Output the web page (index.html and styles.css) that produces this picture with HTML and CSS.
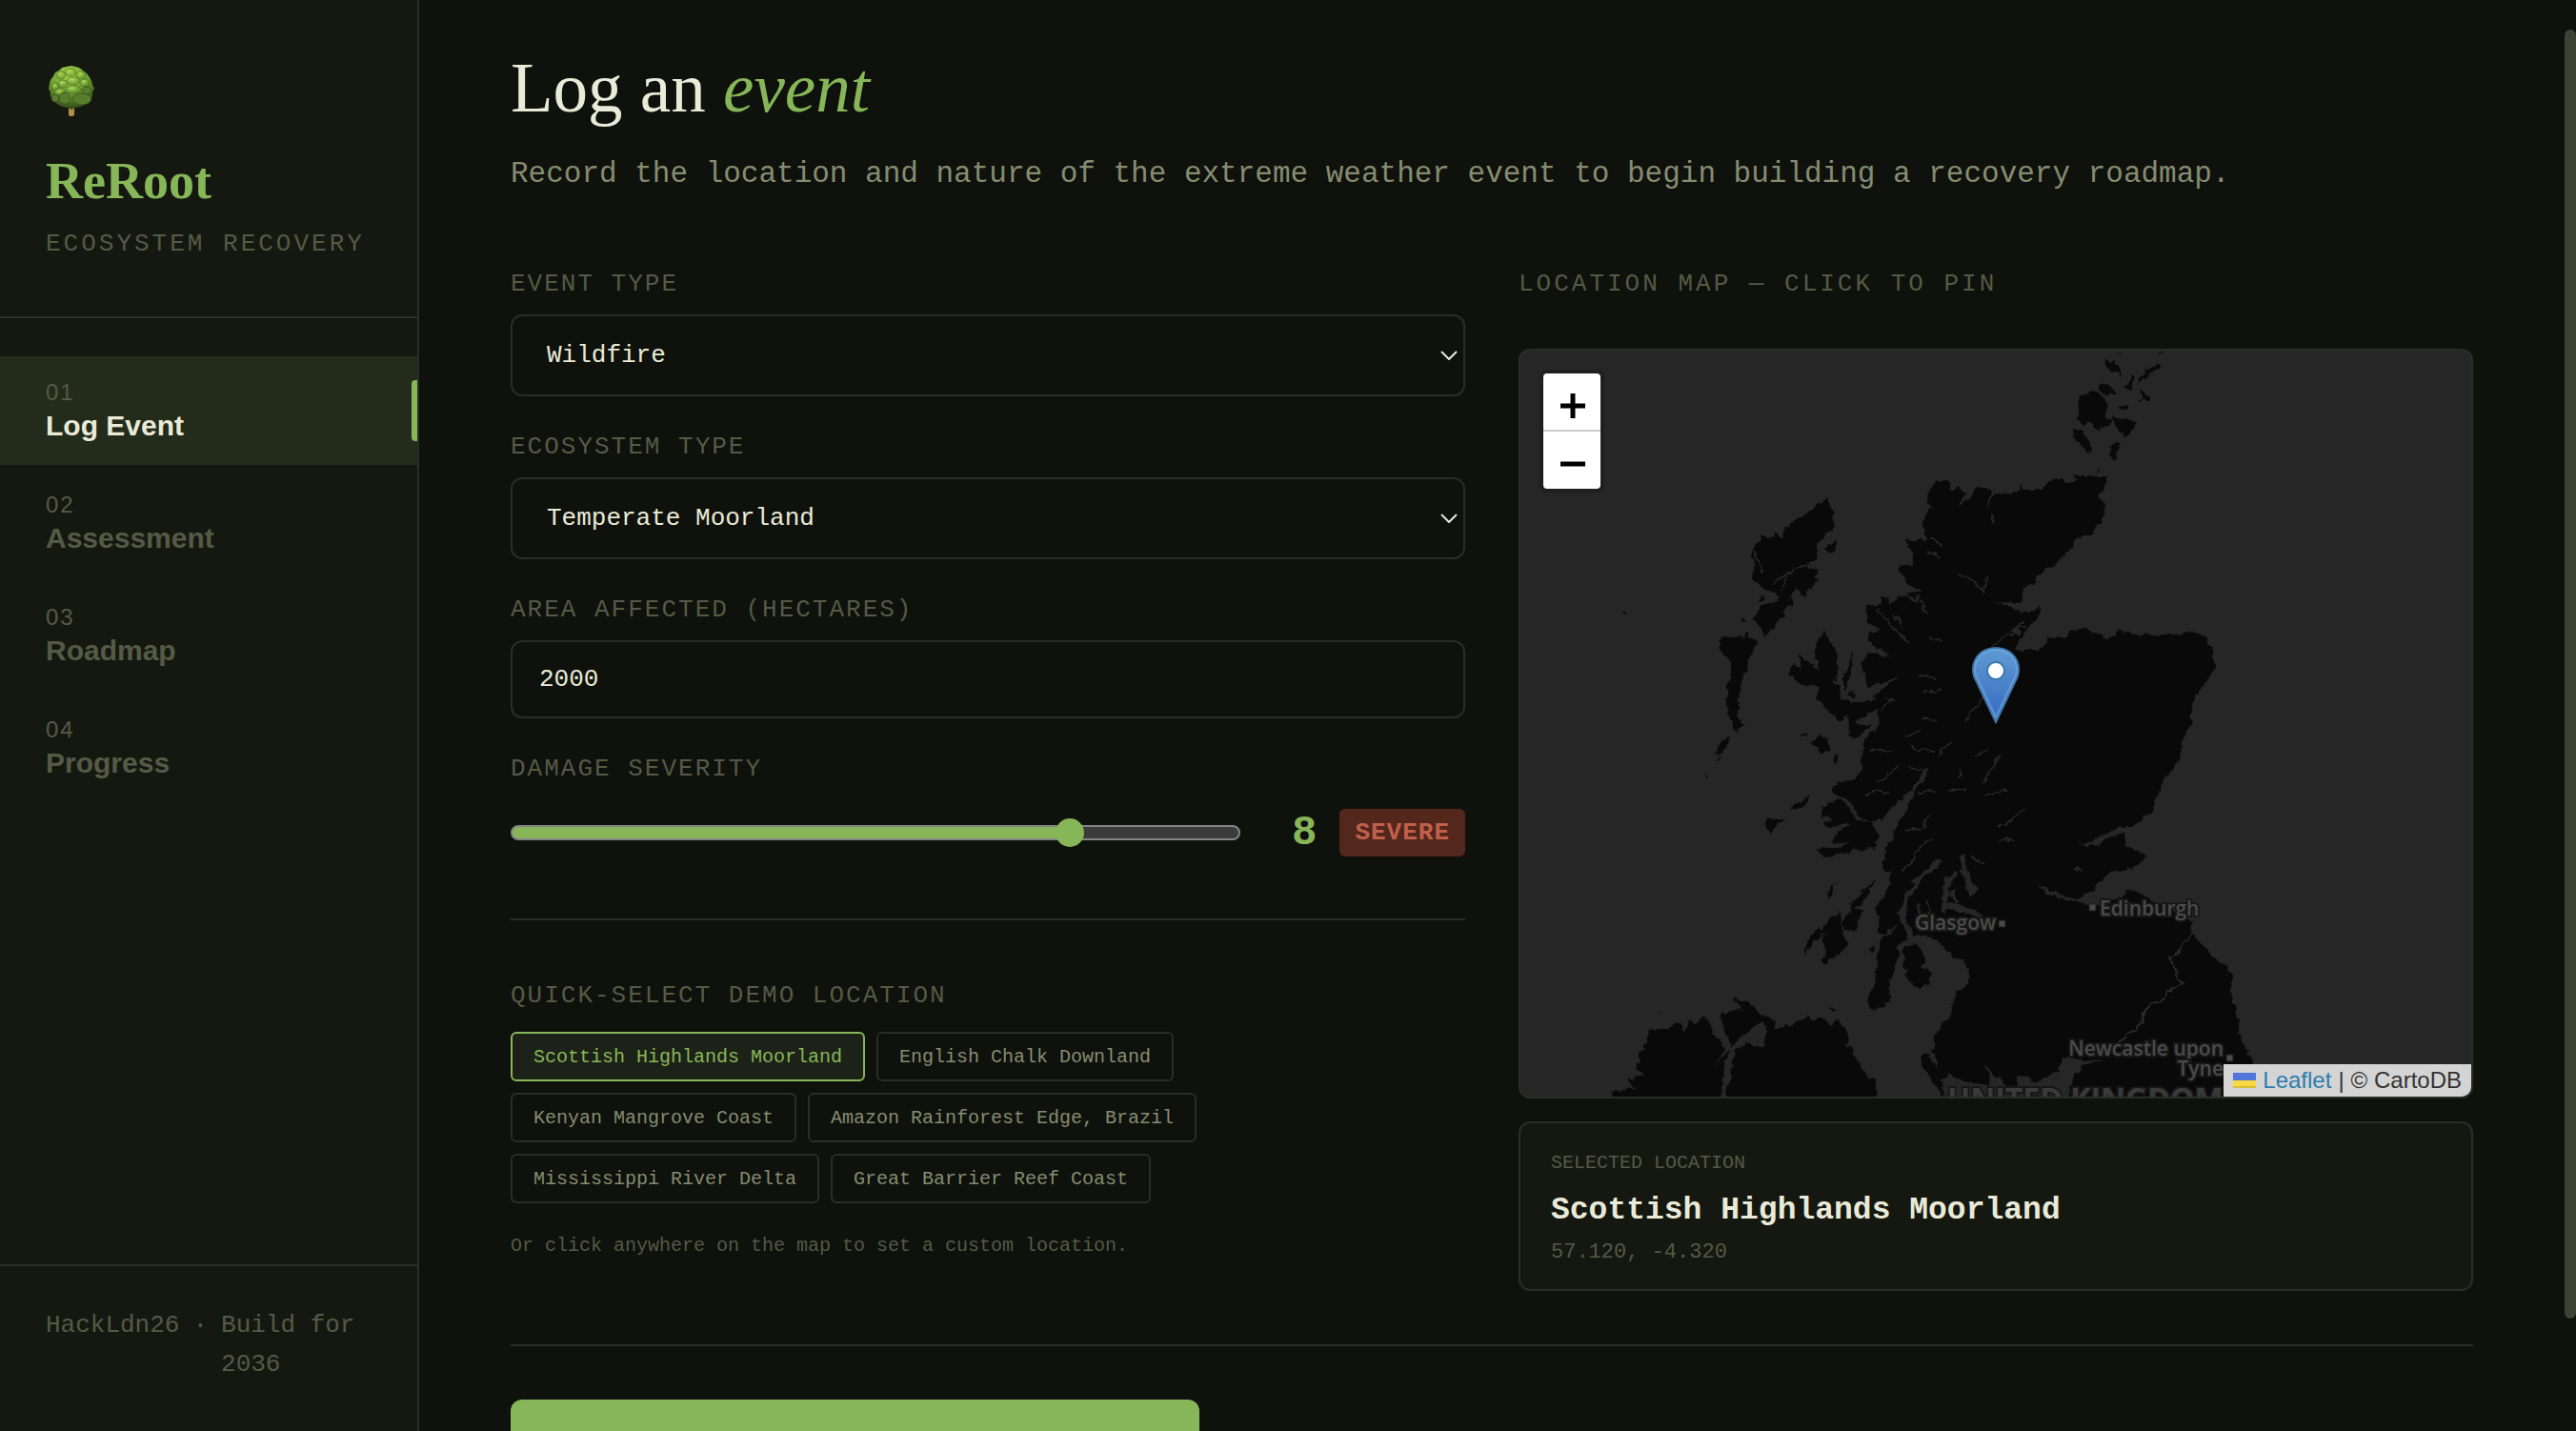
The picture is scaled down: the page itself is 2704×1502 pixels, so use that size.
FILE: index.html
```
<!DOCTYPE html>
<html lang="en">
<head>
<meta charset="utf-8">
<title>ReRoot</title>
<link rel="stylesheet" href="styles.css">
</head>
<body>
<div class="app">
  <aside class="sidebar">
    <header class="brand">
      <svg class="brand-tree" viewBox="0 0 50 54" aria-hidden="true">
        <defs>
          <radialGradient id="leaf" cx=".45" cy=".2" r=".85">
            <stop offset="0" stop-color="#a6d84a"/><stop offset=".5" stop-color="#6f9f33"/><stop offset="1" stop-color="#243c15"/>
          </radialGradient>
          <radialGradient id="clump" cx=".4" cy=".3" r=".7">
            <stop offset="0" stop-color="#b9e85c" stop-opacity=".85"/><stop offset="1" stop-color="#4f7a25" stop-opacity=".3"/>
          </radialGradient>
        </defs>
        <path fill="#b08f4a" d="M22 44h6v8q-3 2-6 0z"/>
        <path fill="url(#leaf)" d="M25 0l4 1 4 1 4 3 4 3 3 4 2 4 1 4 2 4-2 4v4l-3 4-4 4-5 3-6 1-4 2-4-2-6-1-5-3-4-4-3-4v-4l-2-4 1-5 1-4 3-4 2-4 4-2 3-3 5-1z"/>
        <g fill="url(#clump)" stroke="#39581d" stroke-opacity=".5">
          <ellipse cx="24" cy="7" rx="6" ry="4"/><ellipse cx="14" cy="10" rx="5" ry="4"/><ellipse cx="35" cy="10" rx="5" ry="4"/>
          <ellipse cx="27" cy="16" rx="7" ry="4"/><ellipse cx="16" cy="19" rx="5" ry="4"/><ellipse cx="39" cy="18" rx="5" ry="4"/>
          <ellipse cx="8" cy="22" rx="4" ry="4"/><ellipse cx="27" cy="25" rx="8" ry="4"/><ellipse cx="13" cy="28" rx="6" ry="4"/>
        </g>
        <g fill="#577d2d" stroke="#2b4418" stroke-opacity=".6">
          <ellipse cx="41" cy="26" rx="5" ry="4"/><ellipse cx="18" cy="34" rx="6" ry="6"/><ellipse cx="36" cy="35" rx="10" ry="6"/><ellipse cx="8" cy="34" rx="4" ry="4"/>
        </g>
      </svg>
      <div class="brand-name">ReRoot</div>
      <div class="brand-tag">ECOSYSTEM RECOVERY</div>
    </header>
    <nav class="steps">
      <a class="step active" href="#log"><span class="step-num">01</span><span class="step-label">Log Event</span></a>
      <a class="step" href="#assessment"><span class="step-num">02</span><span class="step-label">Assessment</span></a>
      <a class="step" href="#roadmap"><span class="step-num">03</span><span class="step-label">Roadmap</span></a>
      <a class="step" href="#progress"><span class="step-num">04</span><span class="step-label">Progress</span></a>
    </nav>
    <footer class="side-foot"><span>HackLdn26</span><span>·</span><span>Build for 2036</span></footer>
  </aside>

  <main class="main">
    <h1>Log an <em>event</em></h1>
    <p class="intro">Record the location and nature of the extreme weather event to begin building a recovery roadmap.</p>

    <div class="columns">
      <section class="form">
        <div class="field">
          <label for="event-type">EVENT TYPE</label>
          <div class="select">
            <select id="event-type"><option>Wildfire</option></select>
            <svg class="chevron" viewBox="0 0 18 10" aria-hidden="true"><path d="M1 1l8 8 8-8"/></svg>
          </div>
        </div>
        <div class="field">
          <label for="eco-type">ECOSYSTEM TYPE</label>
          <div class="select">
            <select id="eco-type"><option>Temperate Moorland</option></select>
            <svg class="chevron" viewBox="0 0 18 10" aria-hidden="true"><path d="M1 1l8 8 8-8"/></svg>
          </div>
        </div>
        <div class="field">
          <label for="area">AREA AFFECTED (HECTARES)</label>
          <input class="text-input" id="area" type="text" inputmode="numeric" value="2000">
        </div>
        <div class="field">
          <label for="severity">DAMAGE SEVERITY</label>
          <div class="severity">
            <input class="slider" id="severity" type="range" min="1" max="10" value="8">
            <output class="sev-value" for="severity">8</output>
            <span class="sev-badge">SEVERE</span>
          </div>
        </div>
        <div class="quick">
          <h2 class="quick-title">QUICK-SELECT DEMO LOCATION</h2>
          <div class="chips">
            <button class="chip on" type="button">Scottish Highlands Moorland</button>
            <button class="chip" type="button">English Chalk Downland</button>
            <button class="chip" type="button">Kenyan Mangrove Coast</button>
            <button class="chip" type="button">Amazon Rainforest Edge, Brazil</button>
            <button class="chip" type="button">Mississippi River Delta</button>
            <button class="chip" type="button">Great Barrier Reef Coast</button>
          </div>
          <p class="hint">Or click anywhere on the map to set a custom location.</p>
        </div>
      </section>

      <section class="place">
        <h2 class="map-title">LOCATION MAP — CLICK TO PIN</h2>
        <div class="map">
          <svg class="tiles" viewBox="1596 368 998 783" preserveAspectRatio="xMidYMid slice" aria-hidden="true">
            <defs>
              <filter id="coast" x="-5%" y="-5%" width="110%" height="110%" color-interpolation-filters="sRGB">
                <feTurbulence type="fractalNoise" baseFrequency=".11" numOctaves="3" seed="4" result="n"/>
                <feDisplacementMap in="SourceGraphic" in2="n" scale="9" xChannelSelector="R" yChannelSelector="G"/>
              </filter>
              <linearGradient id="pin" x1="0" y1="0" x2="0" y2="1"><stop offset="0" stop-color="#5f9bd3"/><stop offset="1" stop-color="#3569c0"/></linearGradient>
            </defs>
            <g filter="url(#coast)">
              <rect x="1500" y="300" width="1200" height="950" fill="#262626"/>
              <g fill="#090909">
                <path d="M2033 503L2048 507 2051 518 2054 510 2064 517 2056 533 2069 520 2071 512 2082 512 2091 517 2082 533 2094 518 2105 519 2119 515 2122 509 2125 514 2142 513 2156 504 2165 504 2167 507 2179 506 2178 496 2183 500 2212 500 2209 513 2203 523 2211 530 2205 547 2196 558 2180 565 2170 581 2147 599 2140 604 2137 611 2125 617 2123 633 2091 632 2105 635 2121 642 2129 643 2144 635 2131 658 2125 665 2114 682 2139 682 2152 670 2169 668 2171 663 2184 659 2192 661 2212 669 2225 662 2258 667 2275 667 2289 667 2298 663 2312 666 2321 677 2326 697 2326 702 2308 727 2301 743 2299 755 2301 758 2290 780 2288 797 2281 808 2268 821 2266 830 2262 843 2256 853 2239 869 2227 869 2210 874 2194 884 2183 884 2190 888 2200 887 2216 877 2231 873 2233 880 2231 886 2244 893 2252 900 2244 908 2231 915 2221 911 2201 927 2199 935 2179 943 2156 937 2138 927 2150 940 2177 946 2196 950 2227 942 2233 935 2248 937 2252 943 2264 947 2298 967 2302 980 2316 995 2325 1007 2337 1013 2343 1028 2342 1047 2346 1057 2351 1077 2348 1083 2358 1103 2365 1113 2366 1127 2373 1160 2169 1160 2177 1130 2183 1123 2190 1116 2210 1113 2189 1112 2164 1110 2162 1123 2152 1127 2137 1137 2129 1132 2117 1130 2117 1142 2108 1141 2100 1128 2094 1130 2084 1117 2089 1133 2085 1140 2062 1135 2046 1127 2037 1135 2043 1160 2035 1143 2017 1120 2017 1107 2025 1104 2028 1117 2034 1120 2027 1103 2034 1083 2046 1070 2048 1053 2055 1040 2066 1033 2067 1025 2063 1010 2051 1005 2039 992 2033 987 2023 982 2005 983 1994 988 1990 1013 1983 1037 1985 1047 1978 1057 1966 1059 1960 1053 1961 1042 1968 1037 1969 1017 1972 993 1978 983 1972 977 1973 960 1969 955 1982 932 1987 913 1978 917 1976 895 1987 877 1996 860 2010 833 2007 828 1991 847 1971 865 1950 857 1941 840 1926 832 1922 827 1928 821 1948 818 1955 810 1953 798 1959 777 1962 770 1973 760 1971 747 1991 733 1967 732 1992 710 1975 716 1959 722 1954 697 1959 683 1973 690 1985 689 1959 672 1962 662 1973 663 1959 653 1959 635 1971 635 1975 625 1982 627 1984 637 1996 623 2016 622 2001 608 1992 598 1994 593 2007 595 2009 583 1998 567 2023 565 2018 550 2025 533 2033 537 2022 527 2025 517z"/>
                <g transform="translate(1580 270) scale(.357 .333)">
                  <path d="M948 757l20 48-5 35 5 10-38 35-15 25 3 40-30 15 30 20 2 40-25 20-10 20-20 5-10-25-15 20 10 30-25 10-5 25-55 60-40-55 45-50 20 5 15-25-50-20-30-30 5-30-5-50 25-60 30 10 15-15 20 20 5-40 70-45z"/>
                  <path d="M978 890l-10 30-18 10-12-15zM755 1065l8 12-12 8zM700 1135l5 8-10 3zM348 1115l12 4-8 5zM620 1225l20-30 60 5 10-20 30 30-15 35-10 25-5 30-15 30-10 60 5 30-5 25 15 35-30 5-15-45-3-60 5-40 8-60-15-15z"/>
                  <path d="M932 1175l20 20 25 60v60l-10 30 25 25-5 20 20 10 50 5 45-20 30 10-35 35-50 20-20 35-15-5-5-45-15 20-10 5-25-20-15-20-25-30 5-35-25-10-8 20-55-50 10-40 25 25-5-50 60 55-18-60z"/>
                  <path d="M1022 1240l-5 60-8 50-10 15-8-35 20-50zM1020 1370l12 10-10 12-14-8z"/>
                </g>
                <g transform="translate(2100 350) scale(.385 .333)">
                  <path d="M245 180l35 20 17 30-15 30 22 15-20 25-30 8-15-28-10 10-15-20-2-45 3-25zM275 160l30 10 5 25-20 3-18-20zM215 300l30 40 8 30-20 8-15-30-22-20 5-25zM285 88l20 0 15 20 12 25-18-15-12 5zM325 58l2 25-6-10zM440 55l-8 18 2-15zM435 97l4 12-30 20-38 30 20-40 10-15 5 10zM355 130l8 8-5 45-18-18 12-5zM380 180l28 25-5 15-10-15-20 15 15-20zM320 235l22-15 2 28zM305 260l20 15 20-5 22 10 0 20-30 25-10-15-15-15zM295 355l30-8-10 30 2 25-12-5-5-30zM270 425l4 8-8 2z"/>
                </g>
                <g transform="translate(1580 760) scale(.357 .333)">
                  <path d="M658 0h45l-10 10-8 20-5-20zM655 40l5 30-20 20-22 15 0-30 15-25zM595 150l5 15-5 8zM626 110l5 8-8 3zM900 58l28-24 22 12 0 28-16 20zM975 92l10 10-8 22-16-8zM860 38l28-8v8zM895 220l-5 25-30 28-25 0zM830 290l-30 25-20 25-16-20 2-20 20-5 8 8zM1010 0h70l-40 40-30 8zM975 495l-10 30-15 28-5-20zM1090 488l-15 30-20 50-30 15 25 5-25 68-30-5-5-30 25-30 10-40zM983 590l5 60 17 45-15 30-30 15-20 18-12-10 18-40-18-30 20-15-20 5-20 20-25 50 5-50 20-30 15-18 10 10 20-35z"/>
                  <path d="M930 290l5-30 55-25 25 35 15 30 50 10 20 40-15 35-35 18-25-8-35 10-50 17-25-22 15-15 55 5 28-20-53 5 20-35 35-20-20-5-40 10-20-15 25-5z"/>
                  <path d="M1200 692l25 18 10 38-10 15 25 20-5 40-30 8-30-15-10-50-8-40 10-25zM1082 690l0 20-8 15 0-20z"/>
                  <path d="M315 1200v-35l45-20 25 5-25-30 50-10-25-40 15-10-10-25 15-5 25-65 30-5 50-15 20 20 10-30 20 10 30-30 10 30 15 35 20 20 10 30-30 45 45-50-5-30-20-60 5-25 60-10-25-40 60 25 10 25 50 28-10 25-40 35-50 40-25 10-10 15-10 90-20 60z"/>
                  <path d="M640 1200l10-70 10-50 15-60 25-10 45 8 22-60 40 2 20-10 40-15 20-15 20 12 30-2 20 15 15-10 30 25 5 30-3 25 18 5 2 25 25 40 25 30 18 5 0 50-30 40zM440 908l15 8-5 2zM940 893l30 5-5 12-5-10z"/>
                </g>
              </g>
              <g fill="none" stroke="#262626" stroke-width="2">
                <path d="M2055 602L2072 610 2083 622 2085 607M2025 565L2038 572M2024 579L2034 584M2090 540L2092 548M1996 623L2012 630M2012 627L2024 642M1972 640L1996 668 2003 675M1988 645L1996 658M2026 670L2040 672M2015 709L2032 712M2018 728L2036 724M2018 755L2032 757M2063 757L2088 720 2100 703M2089 679L2107 667 2128 657M1998 773L2015 768M2005 785L2030 788M2035 793L2048 778M2073 795L2086 785M2082 823L2090 805 2100 792M2056 817L2058 807M2045 830L2062 829M2084 833L2106 831M1961 788L1985 788M1970 822L1984 813 1992 803M2003 805L2022 808 2010 828M1958 835L1970 830 1984 833M2013 833L2035 829M2096 868L2110 862 2124 850M2098 883L2112 881M2069 900L2083 905M1996 915L2010 900 2014 890 2030 880M1998 870L2015 872 2026 855M1978 983L1992 970M2016 960L2014 950M2026 960L2022 945M1862 612L1880 600 1905 592M1868 620L1878 604M1852 600L1842 580"/>
                <path stroke-width="5" d="M2007 987L1996 958 2004 938 2013 925 2025 912 2038 903M2040 957L2044 930 2054 913M2044 932L2042 920M2042 951L2060 954 2080 960M2048 935L2054 948M2059 897L2063 917 2070 940M1971 866L2008 830 2022 810"/>
                <path fill="#262626" d="M2068 925L2076 936 2068 940zM2112 662L2122 656 2118 666zM2178 912L2184 915 2180 910z"/>
                <path stroke-width="7" d="M1810 1163V1145L1814 1120 1820 1100 1836 1087 1852 1075"/>
                <path fill="#262626" d="M1833 1094L1854 1077 1850 1098z"/>
              </g>
              <path fill="none" stroke="#2b2b2b" stroke-width="2" d="M2302 980L2292 990 2284 1003 2277 1005 2284 1018 2289 1031 2276 1043 2271 1050 2262 1051 2249 1065 2247 1075 2234 1085 2224 1095"/>
            </g>
            <g class="places">
              <text x="2010" y="976">Glasgow</text>
              <text x="2204" y="961">Edinburgh</text>
              <text x="2334" y="1108" text-anchor="end">Newcastle upon</text>
              <text x="2334" y="1129" text-anchor="end">Tyne</text>
              <text class="country" x="2044" y="1165">UNITED KINGDOM</text>
            </g>
            <g fill="#4a4a4a" stroke="#1b1b1b"><rect x="2098" y="966" width="7" height="7"/><rect x="2193" y="949" width="7" height="7"/><rect x="2337" y="1107" width="7" height="7"/></g>
            <path fill="url(#pin)" stroke="#3f78ae" stroke-width="2" d="M2095 758L2075 716C2071 709 2071 705 2071 703C2071 689 2082 680 2095 680S2119 689 2119 703C2119 705 2119 709 2115 716Z"/>
            <path fill="none" stroke="#78aee0" stroke-opacity=".6" stroke-width="2" d="M2095 753L2077 715C2073 709 2073 706 2073 703C2073 690 2083 682 2095 682S2117 690 2117 703C2117 706 2117 709 2113 715Z"/>
            <circle cx="2095" cy="704" r="9" fill="#fff" stroke="#3c76ab" stroke-width="2"/>
          </svg>
          <div class="zoom">
            <button type="button" aria-label="Zoom in"><svg viewBox="0 0 26 26"><path d="M0 13h26M13 0v26"/></svg></button>
            <button type="button" aria-label="Zoom out"><svg viewBox="0 0 26 26"><path d="M0 13h26"/></svg></button>
          </div>
          <div class="credit">
            <svg class="flag" viewBox="0 0 24 16" aria-hidden="true"><path fill="#5277dc" d="M0 0h24v8H0z"/><path fill="#f8d943" d="M0 8h24v8H0z"/><path fill="#dcbf38" d="M0 14h24v2H0z"/></svg>
            <a href="#leaflet">Leaflet</a><span>|</span><span>© CartoDB</span>
          </div>
        </div>
        <div class="card">
          <div class="card-cap">SELECTED LOCATION</div>
          <div class="card-name">Scottish Highlands Moorland</div>
          <div class="card-coord">57.120, -4.320</div>
        </div>
      </section>
    </div>

    <div class="actions"><button class="primary" type="button"></button></div>
  </main>
  <div class="scroll"><div class="scroll-thumb"></div></div>
</div>
</body>
</html>
```
FILE: styles.css
```
:root {
  --bg: #0e110c;
  --panel: #151811;
  --line: #2a2e27;
  --dim: #555a45;
  --muted: #868c70;
  --cream: #e9ead8;
  --green: #87b659;
  --mono: "Liberation Mono", monospace;
  --sans: "Liberation Sans", sans-serif;
  --serif: "Liberation Serif", serif;
}
* { box-sizing: border-box; }
body {
  margin: 0;
  background: var(--bg);
  color: var(--cream);
  font-family: var(--mono);
  font-size: 26px;
}
h1, h2, p { margin: 0; font-weight: 400; }
button, input, select { font: inherit; color: inherit; margin: 0; }

.app { display: flex; height: 100vh; overflow: hidden; }

/* Sidebar */
.sidebar {
  flex: 0 0 440px;
  display: flex;
  flex-direction: column;
  background: var(--panel);
  border-right: 2px solid var(--line);
}
.brand { padding: 69px 48px 56px; border-bottom: 2px solid var(--line); }
.brand-tree { display: block; width: 50px; height: 54px; margin: 0 2px 35px; }
.brand-name {
  font: 700 54px/64px var(--serif);
  color: var(--green);
  margin-bottom: 14px;
}
.brand-tag { line-height: 40px; letter-spacing: 3px; color: var(--dim); white-space: nowrap; }
.steps { flex: 1; display: flex; flex-direction: column; gap: 4px; padding-top: 40px; }
.step {
  position: relative;
  display: flex;
  flex-direction: column;
  gap: 3px;
  padding: 24px 48px 23px;
  color: var(--dim);
  font-family: var(--sans);
  text-decoration: none;
}
.step-num { font-size: 24px; line-height: 28px; letter-spacing: 2px; color: var(--dim); }
.step-label { font-size: 30px; line-height: 36px; font-weight: 700; }
.step.active { background: #232b1b; }
.step.active .step-label { color: var(--cream); }
.step.active::after {
  content: "";
  position: absolute;
  right: 0;
  top: 25px;
  bottom: 25px;
  width: 6px;
  border-radius: 4px 0 0 4px;
  background: var(--green);
}
.side-foot {
  display: flex;
  gap: 14px;
  padding: 42px 48px 49px;
  border-top: 2px solid var(--line);
  line-height: 41px;
  color: var(--dim);
}

/* Main column */
.main { flex: 1; min-width: 0; padding: 53px 96px 0; overflow: hidden; }
h1 { font: 400 73px/80px var(--serif); margin-bottom: 26px; }
h1 em { color: var(--green); }
.intro { font-size: 31px; line-height: 48px; color: var(--muted); }
.columns {
  display: grid;
  grid-template-columns: 1fr 1fr;
  gap: 56px;
  padding: 72px 0 56px;
  border-bottom: 2px solid var(--line);
}
.form, .place { min-width: 0; }

.field { margin-bottom: 34px; }
.field label, .quick-title {
  display: block;
  margin-bottom: 13px;
  font-size: 26px;
  line-height: 38px;
  letter-spacing: 2px;
  color: var(--dim);
}
.select { position: relative; }
.select select, .text-input {
  display: block;
  width: 100%;
  height: 86px;
  padding: 0 36px;
  background: var(--bg);
  border: 2px solid var(--line);
  border-radius: 12px;
  appearance: none;
}
.text-input { height: 82px; padding: 0 28px; }
.chevron {
  position: absolute;
  right: 8px;
  top: 38px;
  width: 18px;
  height: 10px;
  fill: none;
  stroke: var(--cream);
  stroke-width: 2;
}
.severity { display: flex; align-items: center; gap: 24px; padding-top: 10px; }
.slider { flex: 1; min-width: 0; height: 32px; background: none; appearance: none; }
.slider::-webkit-slider-runnable-track {
  height: 16px;
  border: 2px solid #858585;
  border-radius: 8px;
  background: linear-gradient(to right, var(--green) 77%, #3b3b3b 77%);
}
.slider::-webkit-slider-thumb {
  appearance: none;
  width: 30px;
  height: 30px;
  margin-top: -9px;
  border-radius: 50%;
  background: var(--green);
}
.sev-value {
  width: 56px;
  text-align: right;
  font-size: 44px;
  line-height: 50px;
  font-weight: 700;
  color: var(--green);
}
.sev-badge {
  padding: 0 16px;
  border-radius: 6px;
  background: #54271d;
  color: #c0604a;
  font-weight: 700;
  line-height: 50px;
  letter-spacing: 1px;
}
.quick { margin-top: 65px; padding-top: 60px; border-top: 2px solid var(--line); }
.quick-title { margin-bottom: 19px; }
.chips { display: flex; flex-wrap: wrap; gap: 12px; }
.chip {
  height: 52px;
  padding: 0 22px;
  background: none;
  border: 2px solid var(--line);
  border-radius: 6px;
  font-size: 20px;
  color: var(--muted);
}
.chip.on { background: #1d2218; border-color: var(--green); color: var(--green); }
.hint { margin-top: 29px; font-size: 20px; line-height: 32px; color: var(--dim); }

/* Map */
.map-title { font-size: 26px; line-height: 38px; letter-spacing: 3px; color: var(--dim); margin-bottom: 49px; }
.map {
  position: relative;
  height: 787px;
  border: 2px solid var(--line);
  border-radius: 12px;
  background: #262626;
  overflow: hidden;
}
.tiles { display: block; width: 100%; height: 100%; }
.places text {
  font: 600 21px "Open Sans", sans-serif;
  fill: #4a4a4a;
  stroke: #171717;
  stroke-width: 4px;
  paint-order: stroke;
}
.places .country { font-size: 32px; font-weight: 700; fill: #3a3a3a; }
.zoom {
  position: absolute;
  left: 24px;
  top: 24px;
  display: flex;
  flex-direction: column;
  border-radius: 4px;
  box-shadow: 0 0 0 4px #1f1f1f;
  background: #fff;
}
.zoom button {
  display: grid;
  place-items: center;
  width: 60px;
  height: 60px;
  padding: 8px 0 0 2px;
  border: 0;
  background: none;
}
.zoom button:first-child { height: 61px; border-bottom: 2px solid #ccc; }
.zoom svg { width: 26px; height: 26px; fill: none; stroke: #000; stroke-width: 5; }
.credit {
  position: absolute;
  right: 0;
  bottom: 0;
  display: flex;
  align-items: center;
  gap: 7px;
  padding: 0 10px;
  background: #d4d4d4;
  color: #333;
  font: 24px/34px var(--sans);
}
.credit a { color: #2f7cae; text-decoration: none; }
.flag { width: 24px; height: 16px; }

.card {
  margin-top: 24px;
  padding: 26px 32px 20px;
  background: var(--panel);
  border: 2px solid var(--line);
  border-radius: 12px;
  color: var(--dim);
}
.card-cap { font-size: 20px; line-height: 32px; margin-bottom: 8px; }
.card-name { font-size: 33px; line-height: 52px; font-weight: 700; color: var(--cream); }
.card-coord { font-size: 22px; line-height: 36px; }

.actions { display: grid; grid-template-columns: 723px; padding-top: 56px; }
.primary { height: 96px; border: 0; border-radius: 12px; background: var(--green); }

/* Scroll position */
.scroll { flex: 0 0 12px; padding-top: 31px; }
.scroll-thumb { height: 92%; border-radius: 6px; background: #3e4234; }
```
